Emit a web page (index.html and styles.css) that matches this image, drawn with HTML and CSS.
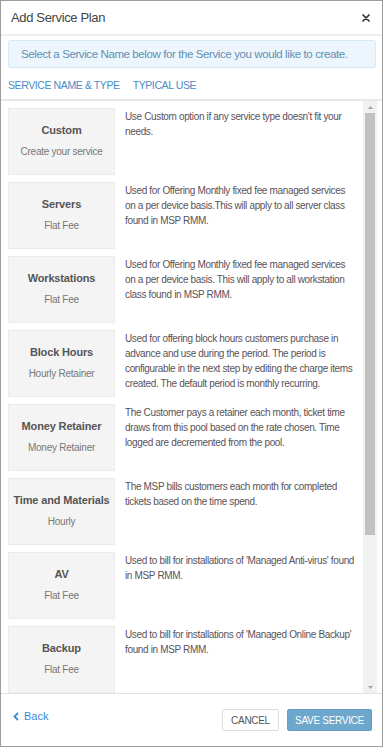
FILE: index.html
```html
<!DOCTYPE html>
<html>
<head>
<meta charset="utf-8">
<link rel="stylesheet" href="styles.css">
</head>
<body>
<div class="modal">
  <div class="header">
    <div class="title">Add Service Plan</div>
    <svg class="close" width="8" height="8" viewBox="0 0 8 8"><path d="M1 1L7 7M7 1L1 7" stroke="#333" stroke-width="1.7" stroke-linecap="round"/></svg>
  </div>
  <div class="top">
    <div class="alert">Select a Service Name below for the Service you would like to create.</div>
    <div class="tabs"><span>SERVICE NAME &amp; TYPE</span><span>TYPICAL USE</span></div>
  </div>
  <div class="scroll">
    <div class="list">
      <div class="row"><div class="card"><div class="name">Custom</div><div class="type">Create your service</div></div><div class="desc">Use Custom option if any service type doesn't fit your needs.</div></div>
      <div class="row"><div class="card"><div class="name">Servers</div><div class="type">Flat Fee</div></div><div class="desc">Used for Offering Monthly fixed fee managed services on a per device basis.This will apply to all server class found in MSP RMM.</div></div>
      <div class="row"><div class="card"><div class="name">Workstations</div><div class="type">Flat Fee</div></div><div class="desc">Used for Offering Monthly fixed fee managed services on a per device basis. This will apply to all workstation class found in MSP RMM.</div></div>
      <div class="row"><div class="card"><div class="name">Block Hours</div><div class="type">Hourly Retainer</div></div><div class="desc">Used for offering block hours customers purchase in advance and use during the period. The period is configurable in the next step by editing the charge items created. The default period is monthly recurring.</div></div>
      <div class="row"><div class="card"><div class="name">Money Retainer</div><div class="type">Money Retainer</div></div><div class="desc">The Customer pays a retainer each month, ticket time draws from this pool based on the rate chosen. Time logged are decremented from the pool.</div></div>
      <div class="row"><div class="card"><div class="name">Time and Materials</div><div class="type">Hourly</div></div><div class="desc">The MSP bills customers each month for completed tickets based on the time spend.</div></div>
      <div class="row"><div class="card"><div class="name">AV</div><div class="type">Flat Fee</div></div><div class="desc">Used to bill for installations of 'Managed Anti-virus' found in MSP RMM.</div></div>
      <div class="row"><div class="card"><div class="name">Backup</div><div class="type">Flat Fee</div></div><div class="desc">Used to bill for installations of 'Managed Online Backup' found in MSP RMM.</div></div>
    </div>
    <div class="scrollbar">
      <div class="arrow"><svg width="5" height="3" viewBox="0 0 5 3"><path d="M0 3L2.5 0L5 3Z" fill="#a3a3a3"/></svg></div>
      <div class="thumb"></div>
      <div class="rest"></div>
      <div class="arrow"><svg width="5" height="3" viewBox="0 0 5 3"><path d="M0 0L2.5 3L5 0Z" fill="#a3a3a3"/></svg></div>
    </div>
  </div>
  <div class="footer">
    <div class="back"><svg width="6" height="9" viewBox="0 0 6 9"><path d="M5 1L1.5 4.5L5 8" fill="none" stroke="#3b8ad8" stroke-width="1.8"/></svg><span>Back</span></div>
    <div class="buttons">
      <div class="btn cancel">CANCEL</div>
      <div class="btn save">SAVE SERVICE</div>
    </div>
  </div>
</div>
</body>
</html>
```

FILE: styles.css
```css
* { box-sizing: border-box; }
html, body { margin: 0; padding: 0; background: #fff; }
body { font-family: "Liberation Sans", Arial, sans-serif; }

.modal {
  width: 383px;
  height: 747px;
  border: 1px solid #9c9c9c;
  display: flex;
  flex-direction: column;
  background: #fff;
  overflow: hidden;
}

.header {
  height: 35px;
  border-bottom: 2px solid #eeeeee;
  display: flex;
  align-items: center;
  justify-content: space-between;
  padding: 0 12px 0 10px;
  flex: none;
}
.title { font-size: 13px; color: #444; letter-spacing: -0.35px; }
.close { display: block; }

.top { flex: none; padding: 4px 6px 0 7px; border-bottom: 2px solid #e8e8e8; }
.alert {
  height: 28px;
  background: #edf6fc;
  border: 1px solid #d6e9f6;
  border-radius: 2px;
  color: #5f8fb6;
  font-size: 11.5px;
  letter-spacing: -0.4px;
  display: flex;
  align-items: center;
  padding-left: 12px;
}
.tabs {
  height: 31px;
  display: flex;
  align-items: center;
  gap: 13px;
  color: #4b8bc5;
  font-size: 10.5px;
  letter-spacing: -0.4px;
  padding-top: 2px;
}

.scroll { flex: 1; display: flex; min-height: 0; }
.list {
  flex: 1;
  overflow: hidden;
  padding: 7px 0 0 7px;
  display: flex;
  flex-direction: column;
  gap: 7px;
}
.row { display: flex; gap: 10px; flex: none; }
.card {
  width: 107px;
  height: 67px;
  flex: none;
  background: #f4f4f4;
  border: 1px solid #eaeaea;
  display: flex;
  flex-direction: column;
  align-items: center;
  justify-content: center;
  gap: 10px;
  padding-bottom: 2px;
}
.name { font-size: 11px; font-weight: bold; color: #555; letter-spacing: -0.15px; }
.type { font-size: 10px; color: #777; letter-spacing: -0.25px; }
.desc {
  font-size: 10px;
  line-height: 15px;
  color: #5a525a;
  letter-spacing: -0.35px;
  width: 232px;
  padding-top: 1px;
}

.scrollbar {
  width: 14px;
  flex: none;
  margin-right: 5px;
  background: #f1f1f1;
  display: flex;
  flex-direction: column;
  align-items: center;
}
.arrow { height: 12px; display: flex; align-items: center; justify-content: center; flex: none; }
.thumb { width: 10px; height: 422px; background: #c1c1c1; flex: none; }
.rest { flex: 1; }

.footer {
  height: 53px;
  flex: none;
  border-top: 1px solid #e2e2e2;
  display: flex;
  align-items: center;
  justify-content: space-between;
  padding: 0 10px 0 12px;
}
.back { display: flex; align-items: center; gap: 5px; color: #3b8ad8; font-size: 11px; margin-top: -8px; }
.back svg { display: block; }
.buttons { display: flex; gap: 8px; }
.btn {
  height: 22px;
  display: flex;
  align-items: center;
  justify-content: center;
  font-size: 10px;
  letter-spacing: -0.3px;
  border-radius: 2px;
}
.cancel { width: 57px; border: 1px solid #dcdcdc; color: #555; background: #fff; }
.save { width: 85px; background: #6ea7cc; border: 1px solid #639ec5; color: #fff; }
```
